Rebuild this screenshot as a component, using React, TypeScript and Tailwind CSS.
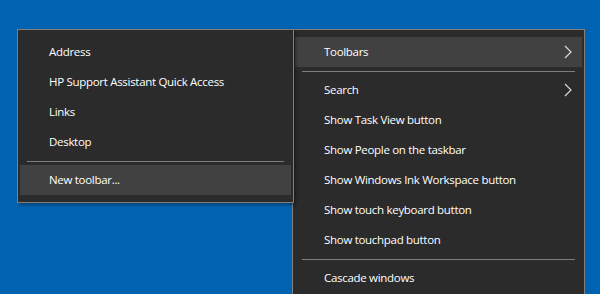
const font = { fontFamily: '"Segoe UI", "Open Sans", "Noto Sans", sans-serif' };

function Chevron() {
  return (
    <svg width="8" height="14" viewBox="0 0 8 14" className="text-[#d9d9d9]">
      <polyline points="1,1 7,7 1,13" fill="none" stroke="currentColor" strokeWidth="1.2" />
    </svg>
  );
}

function Item({ label, active, sub }: { label: string; active?: boolean; sub?: boolean }) {
  return (
    <div
      className={`mx-[2px] h-[30px] flex items-center justify-between pl-[29px] pr-[10px] text-[11.5px] tracking-[-0.3px] text-white ${
        active ? "bg-[#414141]" : ""
      }`}
    >
      <span>{label}</span>
      {sub && <Chevron />}
    </div>
  );
}

function Sep() {
  return (
    <div className="h-[8px] flex items-center px-[9px]">
      <div className="h-px w-full bg-[#7d7d7d]" />
    </div>
  );
}

export default function App() {
  return (
    <div className="relative w-[600px] h-[294px] overflow-hidden bg-[#0063b1]" style={font}>
      {/* main taskbar menu */}
      <div className="absolute left-[292px] top-[29px] w-[293px] h-[300px] border border-[#808080] bg-[#2b2b2b] py-[7px]">
        <Item label="Toolbars" active sub />
        <Sep />
        <Item label="Search" sub />
        <Item label="Show Task View button" />
        <Item label="Show People on the taskbar" />
        <Item label="Show Windows Ink Workspace button" />
        <Item label="Show touch keyboard button" />
        <Item label="Show touchpad button" />
        <Sep />
        <Item label="Cascade windows" />
      </div>

      {/* toolbars submenu */}
      <div className="absolute left-[17px] top-[29px] w-[277px] border border-[#808080] bg-[#2b2b2b] py-[7px] shadow-[2px_2px_3px_rgba(0,0,0,0.35)]">
        <Item label="Address" />
        <Item label="HP Support Assistant Quick Access" />
        <Item label="Links" />
        <Item label="Desktop" />
        <Sep />
        <Item label="New toolbar..." active />
      </div>
    </div>
  );
}
